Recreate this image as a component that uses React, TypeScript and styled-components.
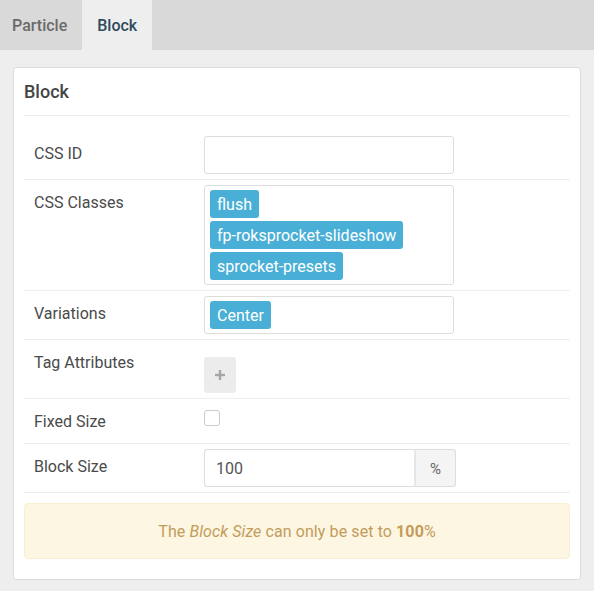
import styled, { createGlobalStyle } from 'styled-components'

const GlobalStyle = createGlobalStyle`
  html, body {
    margin: 0;
    padding: 0;
    background: #eeeeee;
    font-family: Roboto, "Liberation Sans", sans-serif;
  }
`

const Page = styled.div`
  width: 594px;
  min-height: 591px;
  background: #eeeeee;
`

const TabBar = styled.div`
  display: flex;
  height: 50px;
  background: #d9d9d9;
`

const Tab = styled.div<{ $active?: boolean }>`
  display: flex;
  align-items: center;
  padding: 1px ${props => props.$active ? '15px' : '15px'} 0 ${props => props.$active ? '15px' : '12px'};
  font-size: 16px;
  font-weight: 500;
  color: ${props => props.$active ? '#2f4b5c' : '#6a6a6a'};
  background: ${props => props.$active ? '#eeeeee' : 'transparent'};
`

const Content = styled.div`
  padding: 17px 13px 12px;
`

const Card = styled.div`
  background: #fff;
  border: 1px solid #dcdcdc;
  border-radius: 3px;
  padding: 0 10px 10px;
`

const CardTitle = styled.h2`
  margin: 0 0 15px;
  padding: 12px 0 11px;
  font-size: 18px;
  line-height: 24px;
  font-weight: 500;
  color: #444;
  border-bottom: 1px solid #eeeeee;
`

const Row = styled.div`
  display: flex;
  align-items: flex-start;
  padding: 5px 0 5px 10px;
  border-bottom: 1px solid #eeeeee;
`

const Label = styled.div`
  width: 170px;
  flex: none;
  font-size: 16px;
  padding-top: 1px;
  line-height: 33px;
  color: #4a4a4a;
`

const Field = styled.div`
  display: flex;
  flex-direction: column;
  align-items: flex-start;
`

const TextInput = styled.div<{ $width?: number }>`
  box-sizing: border-box;
  width: ${props => props.$width ?? 250}px;
  height: 38px;
  border: 1px solid #dddddd;
  border-radius: 3px;
  padding: 1px 11px 0;
  font-size: 16px;
  line-height: 35px;
  color: #555;
  background: #fff;
`

const TagBox = styled.div`
  box-sizing: border-box;
  width: 250px;
  min-height: 38px;
  border: 1px solid #dddddd;
  border-radius: 3px;
  padding: 4px 5px;
  display: flex;
  flex-direction: column;
  align-items: flex-start;
  gap: 3px;
`

const Tag = styled.span`
  display: inline-block;
  box-sizing: border-box;
  height: 28px;
  padding: 1px 7px 0;
  line-height: 27px;
  border-radius: 3px;
  background: #4aafd6;
  color: #fff;
  font-size: 16px;
`

const AddButton = styled.div`
  width: 32px;
  height: 36px;
  margin-top: 12px;
  border-radius: 3px;
  background: #ececec;
  display: flex;
  align-items: center;
  justify-content: center;
`

const Checkbox = styled.div`
  box-sizing: border-box;
  width: 16px;
  height: 16px;
  margin-top: 6px;
  border: 1px solid #cccccc;
  border-radius: 3px;
  background: #fff;
`

const InputGroup = styled.div`
  display: flex;
`

const Addon = styled.div`
  box-sizing: border-box;
  width: 42px;
  height: 38px;
  border: 1px solid #dddddd;
  border-left-width: 2px;
  border-left-color: #e6e6e6;
  border-radius: 0 3px 3px 0;
  background: #f4f4f4;
  color: #666;
  font-size: 15px;
  padding-top: 1px;
  display: flex;
  align-items: center;
  justify-content: center;
`

const GroupInput = styled(TextInput)`
  border-right: none;
  border-radius: 3px 0 0 3px;
`

const Alert = styled.div`
  margin: 10px 0 10px;
  height: 56px;
  box-sizing: border-box;
  border: 1px solid #faefd2;
  border-radius: 4px;
  background: #fcf6e3;
  color: #c39c5a;
  font-size: 16px;
  letter-spacing: 0.1px;
  display: flex;
  align-items: center;
  justify-content: center;

  em {
    margin: 0 4px;
  }

  strong {
    margin-left: 4px;
    font-weight: 700;
  }
`

const PlusIcon = () => (
  <svg width="10" height="10" viewBox="0 0 10 10">
    <rect x="3.8" y="0" width="2.4" height="10" fill="#a6a6a6" />
    <rect x="0" y="3.8" width="10" height="2.4" fill="#a6a6a6" />
  </svg>
)

const App = () => {
  return (
    <Page>
      <GlobalStyle />
      <TabBar>
        <Tab>Particle</Tab>
        <Tab $active>Block</Tab>
      </TabBar>
      <Content>
        <Card>
          <CardTitle>Block</CardTitle>
          <Row>
            <Label>CSS ID</Label>
            <Field>
              <TextInput />
            </Field>
          </Row>
          <Row>
            <Label>CSS Classes</Label>
            <Field>
              <TagBox>
                <Tag>flush</Tag>
                <Tag>fp-roksprocket-slideshow</Tag>
                <Tag>sprocket-presets</Tag>
              </TagBox>
            </Field>
          </Row>
          <Row>
            <Label>Variations</Label>
            <Field>
              <TagBox>
                <Tag>Center</Tag>
              </TagBox>
            </Field>
          </Row>
          <Row>
            <Label>Tag Attributes</Label>
            <Field>
              <AddButton>
                <PlusIcon />
              </AddButton>
            </Field>
          </Row>
          <Row>
            <Label>Fixed Size</Label>
            <Field>
              <Checkbox />
            </Field>
          </Row>
          <Row>
            <Label>Block Size</Label>
            <Field>
              <InputGroup>
                <GroupInput $width={210}>100</GroupInput>
                <Addon>%</Addon>
              </InputGroup>
            </Field>
          </Row>
          <Alert>
            The<em>Block Size</em>can only be set to<strong>100</strong>%
          </Alert>
        </Card>
      </Content>
    </Page>
  )
}

export default App
